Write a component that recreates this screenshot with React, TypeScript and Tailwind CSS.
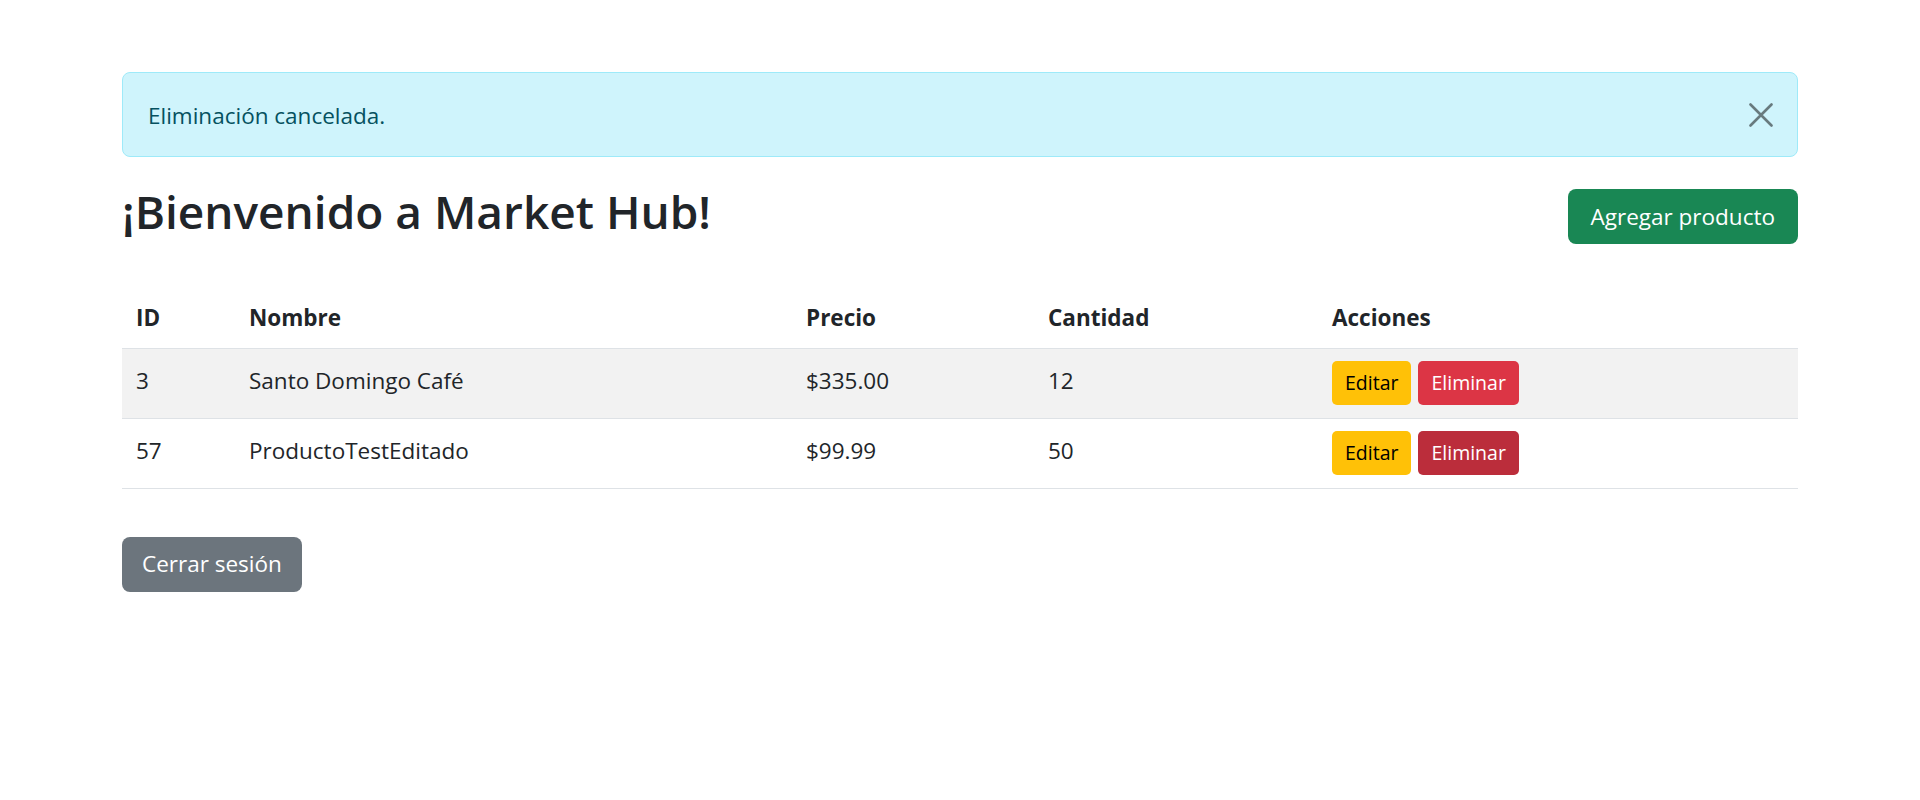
const products = [
  { id: 3, name: "Santo Domingo Café", price: "$335.00", qty: 12 },
  { id: 57, name: "ProductoTestEditado", price: "$99.99", qty: 50 },
];

function CloseIcon() {
  return (
    <svg width="24" height="24" viewBox="0 0 24 24" fill="none">
      <path
        d="M1.5 1.5L22.5 22.5M22.5 1.5L1.5 22.5"
        stroke="#687a7e"
        strokeWidth="2.6"
        strokeLinecap="round"
      />
    </svg>
  );
}

export default function App() {
  return (
    <div className="min-h-screen bg-white font-['Open_Sans',sans-serif] text-[#212529]">
      <div className="px-[122px] pt-[72px]">
        <div className="flex h-[85px] items-center justify-between rounded-[8px] border border-[#9eeaf9] bg-[#cff4fc] pl-[25px] pr-[24px] text-[22.5px] text-[#055160]">
          <span className="pt-[2px]">Eliminación cancelada.</span>
          <button className="flex h-[24px] w-[24px] items-center justify-center">
            <CloseIcon />
          </button>
        </div>

        <div className="mt-[32px] flex h-[55px] items-center justify-between">
          <h1 className="pb-[12px] text-[46px] font-semibold leading-none">¡Bienvenido a Market Hub!</h1>
          <button className="h-[55px] rounded-[8px] bg-[#198754] px-[23px] text-[22.5px] text-white">
            Agregar producto
          </button>
        </div>

        <table className="mt-[48px] w-full table-fixed border-collapse text-left text-[22.5px]">
          <colgroup>
            <col className="w-[113px]" />
            <col className="w-[557px]" />
            <col className="w-[242px]" />
            <col className="w-[284px]" />
            <col />
          </colgroup>
          <thead>
            <tr className="h-[56px] border-b border-[#dee2e6]">
              <th className="pb-[3px] pl-[14px] font-bold">ID</th>
              <th className="pb-[3px] pl-[14px] font-bold">Nombre</th>
              <th className="pb-[3px] pl-[14px] font-bold">Precio</th>
              <th className="pb-[3px] pl-[14px] font-bold">Cantidad</th>
              <th className="pb-[3px] pl-[14px] font-bold">Acciones</th>
            </tr>
          </thead>
          <tbody>
            {products.map((p, i) => (
              <tr
                key={p.id}
                className={`h-[70px] border-b border-[#dee2e6] ${i === 0 ? "bg-[#f2f2f2]" : "bg-white"}`}
              >
                <td className="pb-[5px] pl-[14px]">{p.id}</td>
                <td className="pb-[5px] pl-[14px]">{p.name}</td>
                <td className="pb-[5px] pl-[14px]">{p.price}</td>
                <td className="pb-[5px] pl-[14px]">{p.qty}</td>
                <td className="pl-[14px]">
                  <div className="flex gap-[7px]">
                    <button className="h-[44px] rounded-[5px] bg-[#ffc107] px-[13px] text-[19.5px] text-black">
                      Editar
                    </button>
                    <button
                      className={`h-[44px] rounded-[5px] px-[13px] text-[19.5px] text-white ${i === 0 ? "bg-[#dc3545]" : "bg-[#bb2d3b]"}`}
                    >
                      Eliminar
                    </button>
                  </div>
                </td>
              </tr>
            ))}
          </tbody>
        </table>

        <button className="mt-[48px] h-[55px] rounded-[8px] bg-[#6c757d] px-[20px] text-[22.5px] text-white">
          Cerrar sesión
        </button>
      </div>
    </div>
  );
}
